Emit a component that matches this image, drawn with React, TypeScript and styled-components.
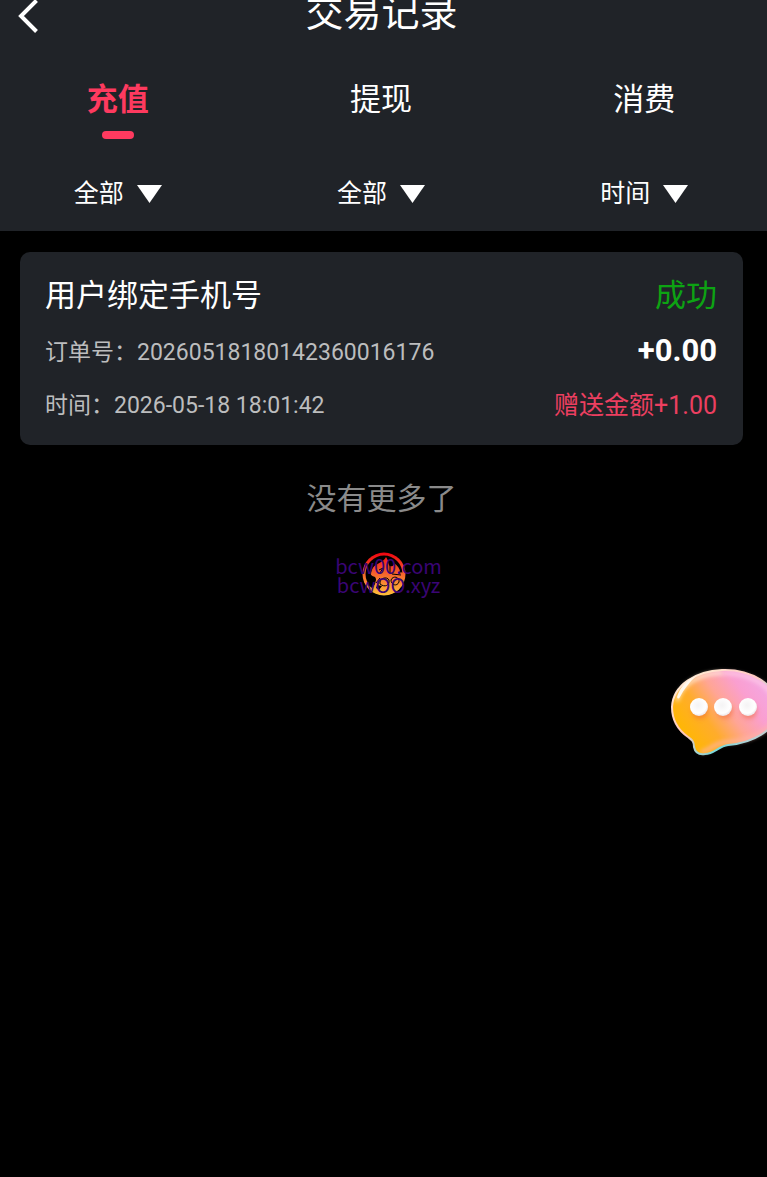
import React, { useState } from 'react';
import styled, { createGlobalStyle } from 'styled-components';

const GlobalStyle = createGlobalStyle`
  * { box-sizing: border-box; }
  body {
    margin: 0;
    background: #000;
    color: #fff;
    font-family: Roboto, 'Noto Sans CJK SC', sans-serif;
  }
  button, select { font-family: inherit; color: inherit; }
`;

const Page = styled.div`
  position: relative;
  min-height: 100vh;
  overflow: hidden;
`;

const Header = styled.header`
  background: #202328;
  padding-bottom: 19px;
`;

const TitleBar = styled.div`
  display: grid;
  grid-template-columns: 48px 1fr 48px;
  grid-template-rows: 26px;
  align-items: center;
  padding-right: 4px;
`;

const BackButton = styled.button`
  display: flex;
  justify-content: center;
  padding: 6px 0 0 8px;
  border: 0;
  background: none;
`;

const Title = styled.h1`
  margin: 0;
  text-align: center;
  font-size: 38px;
  font-weight: 400;
  line-height: 26px;
`;

const Columns = styled.div`
  display: grid;
  grid-template-columns: repeat(3, 1fr);
  gap: 56px;
  padding: 0 19px 0 14px;
`;

const Tabs = styled(Columns)`
  padding-top: 54px;
`;

const Tab = styled.button<{ $active: boolean }>`
  display: flex;
  flex-direction: column;
  align-items: center;
  gap: 11px;
  padding: 0;
  border: 0;
  background: none;
  color: ${(p) => (p.$active ? '#fe3a5f' : '#fff')};
  font-size: 31px;
  font-weight: ${(p) => (p.$active ? 700 : 400)};
  line-height: 40px;

  &::after {
    content: '';
    width: 32px;
    height: 8px;
    border-radius: 4px;
    background: ${(p) => (p.$active ? '#fe3a5f' : 'transparent')};
  }
`;

const Filters = styled(Columns)`
  padding-top: 37px;
`;

const Filter = styled.label`
  display: flex;
  align-items: center;
  justify-content: center;
  gap: 13px;
`;

const Select = styled.select`
  appearance: none;
  width: 50px;
  height: 36px;
  padding: 0;
  border: 0;
  background: none;
  font-size: 25px;
  line-height: 36px;
`;

const List = styled.main`
  padding: 21px 24px 0 20px;
`;

const Card = styled.article`
  display: flex;
  flex-direction: column;
  gap: 11px;
  padding: 14px 26px 21px 25px;
  border-radius: 10px;
  background: #202328;
`;

const Row = styled.div<{ $head?: boolean }>`
  display: flex;
  align-items: center;
  justify-content: space-between;
  height: ${(p) => (p.$head ? 52 : 42)}px;
`;

const Name = styled.h2`
  margin: 0;
  font-size: 31px;
  font-weight: 400;
`;

const Status = styled.span`
  color: #0da313;
  font-size: 31px;
`;

const Detail = styled.span`
  color: #bcbdbe;
  font-size: 23px;
`;

const Amount = styled.strong`
  font-size: 31px;
  font-weight: 700;
`;

const Bonus = styled.span`
  color: #ec3f60;
  font-size: 25px;
`;

const EndNote = styled.p`
  margin: 32px 0 0;
  text-align: center;
  color: #8a8a8a;
  font-size: 30px;
  line-height: 44px;
`;

const Brand = styled.footer`
  position: relative;
  display: flex;
  justify-content: center;
  margin-top: 31px;
`;

const Watermark = styled.div`
  position: absolute;
  top: 4px;
  left: 0;
  right: 0;
  padding-left: 10px;
  text-align: center;
  color: #3a0574;
  font-family: 'Noto Sans CJK SC', sans-serif;
  font-size: 20px;
  line-height: 19px;
`;

const ChatButton = styled.button`
  position: absolute;
  top: 665px;
  right: -13px;
  padding: 0;
  border: 0;
  background: none;
`;

const BackIcon = () => (
  <svg width="24" height="36" viewBox="0 0 24 36" fill="none">
    <path d="M20.500 2.500L5 18L20.500 33.500" stroke="#fff" strokeWidth="4" />
  </svg>
);

const Triangle = () => (
  <svg width="25" height="18" viewBox="0 0 25 18">
    <path d="M0 0H25L12.500 18Z" fill="#fff" />
  </svg>
);

const FlameLogo = () => (
  <svg width="44" height="44" viewBox="0 0 44 44">
    <defs>
      <linearGradient id="flame" x1="0" y1="0" x2="0" y2="1">
        <stop offset="0" stopColor="#f0000f" />
        <stop offset="0.5" stopColor="#f5652c" />
        <stop offset="1" stopColor="#ffc23a" />
      </linearGradient>
      <mask id="cut">
        <rect width="44" height="44" fill="#000" />
        <circle cx="22" cy="22" r="21.500" fill="#fff" />
        <circle cx="22" cy="22" r="18.500" fill="#000" />
        <path d="M9 20C11 13 16 12 19 10C22 8 23 7 24 5C27 9 26 13 28 14C31 15 32 13 32 11C36 14 38 17 38 20L42 21C42 35 33 43 22 43C15 43 9 39 6 34C11 33 16 28 13 25C10 24 8 23 9 20Z" fill="#fff" />
        <path d="M17 18L21 16L18 21M28 13L28 21M30 22L39 23M14 31L18 26M18 32C17 26 25 24 27 28C28 33 23 36 18 32M29 28C31 23 38 25 37 30C35 35 29 33 29 28" fill="none" stroke="#000" strokeWidth="1" />
        <path d="M7 30L14 27L13 32L10 36L6 33ZM15 33L20 34L17 38L14 36Z" fill="#000" />
      </mask>
    </defs>
    <rect width="44" height="44" fill="url(#flame)" mask="url(#cut)" />
  </svg>
);

const ChatIcon = () => (
  <svg width="110" height="96" viewBox="0 0 110 96">
    <defs>
      <linearGradient id="body" x1="0.1" y1="0.75" x2="0.9" y2="0.3">
        <stop offset="0" stopColor="#ffb703" />
        <stop offset="0.3" stopColor="#ffac2c" />
        <stop offset="0.55" stopColor="#ffa595" />
        <stop offset="0.8" stopColor="#fa9fd0" />
        <stop offset="1" stopColor="#f5a5df" />
      </linearGradient>
      <linearGradient id="rim" x1="0" y1="0" x2="1" y2="1">
        <stop offset="0" stopColor="#fff1d9" />
        <stop offset="0.45" stopColor="#ffc5b5" />
        <stop offset="0.7" stopColor="#68dce0" />
        <stop offset="1" stopColor="#ffe0f5" />
      </linearGradient>
      <radialGradient id="dot" cx="0.45" cy="0.4" r="0.6">
        <stop offset="0" stopColor="#f4f3f4" />
        <stop offset="0.75" stopColor="#ffffff" />
        <stop offset="1" stopColor="#ebe4e8" />
      </radialGradient>
      <filter id="soft" x="-30%" y="-30%" width="160%" height="160%">
        <feGaussianBlur stdDeviation="2" />
      </filter>
    </defs>
    <path d="M52 5C80 4 108 19 108 43C108 66 81 78 58 80C49 81 44 89 35 89C28 90 25 87 24 82C24 76 22 75 18 72C8 65 2 54 2 42C3 20 26 6 52 5Z" fill="url(#body)" stroke="url(#rim)" strokeWidth="2" />
    <path d="M7 36C11 18 31 8 53 8" fill="none" stroke="#fff0dd" strokeWidth="3" filter="url(#soft)" />
    <path d="M7 32C10 22 17 15 26 11C19 18 14 24 10 32Q8 35 7 32Z" fill="#fff8ed" />
    <path d="M53 8C75 8 96 17 103 32" fill="none" stroke="#ffd0e8" strokeWidth="3" filter="url(#soft)" />
    <path d="M31 87C41 85 43 78 56 77C75 76 92 70 102 58" fill="none" stroke="#ffb3a8" strokeWidth="3" filter="url(#soft)" />
    <g fill="#ef6b36" opacity="0.5" filter="url(#soft)">
      <circle cx="30" cy="46" r="8" />
      <circle cx="55" cy="46" r="8" />
      <circle cx="79" cy="46" r="8" />
    </g>
    <g fill="url(#dot)">
      <circle cx="29" cy="42" r="9" />
      <circle cx="53" cy="42" r="9" />
      <circle cx="78" cy="42" r="9" />
    </g>
  </svg>
);

const TABS = ['充值', '提现', '消费'];
const FILTERS = [
  { name: '类型', value: '全部' },
  { name: '状态', value: '全部' },
  { name: '日期', value: '时间' },
];

export default function App() {
  const [active, setActive] = useState(TABS[0]);
  return (
    <Page>
      <GlobalStyle />
      <Header>
        <TitleBar>
          <BackButton aria-label="返回"><BackIcon /></BackButton>
          <Title>交易记录</Title>
        </TitleBar>
        <Tabs role="tablist">
          {TABS.map((t) => (
            <Tab key={t} role="tab" aria-selected={t === active} $active={t === active} onClick={() => setActive(t)}>
              {t}
            </Tab>
          ))}
        </Tabs>
        <Filters>
          {FILTERS.map((f) => (
            <Filter key={f.name}>
              <Select aria-label={f.name}>
                <option>{f.value}</option>
              </Select>
              <Triangle />
            </Filter>
          ))}
        </Filters>
      </Header>
      <List>
        <Card>
          <Row $head>
            <Name>用户绑定手机号</Name>
            <Status>成功</Status>
          </Row>
          <Row>
            <Detail>订单号：20260518180142360016176</Detail>
            <Amount>+0.00</Amount>
          </Row>
          <Row>
            <Detail>时间：2026-05-18 18:01:42</Detail>
            <Bonus>赠送金额+1.00</Bonus>
          </Row>
        </Card>
        <EndNote>没有更多了</EndNote>
      </List>
      <Brand>
        <FlameLogo />
        <Watermark>
          <div>bcw00.com</div>
          <div>bcwOO.xyz</div>
        </Watermark>
      </Brand>
      <ChatButton aria-label="在线客服"><ChatIcon /></ChatButton>
    </Page>
  );
}
